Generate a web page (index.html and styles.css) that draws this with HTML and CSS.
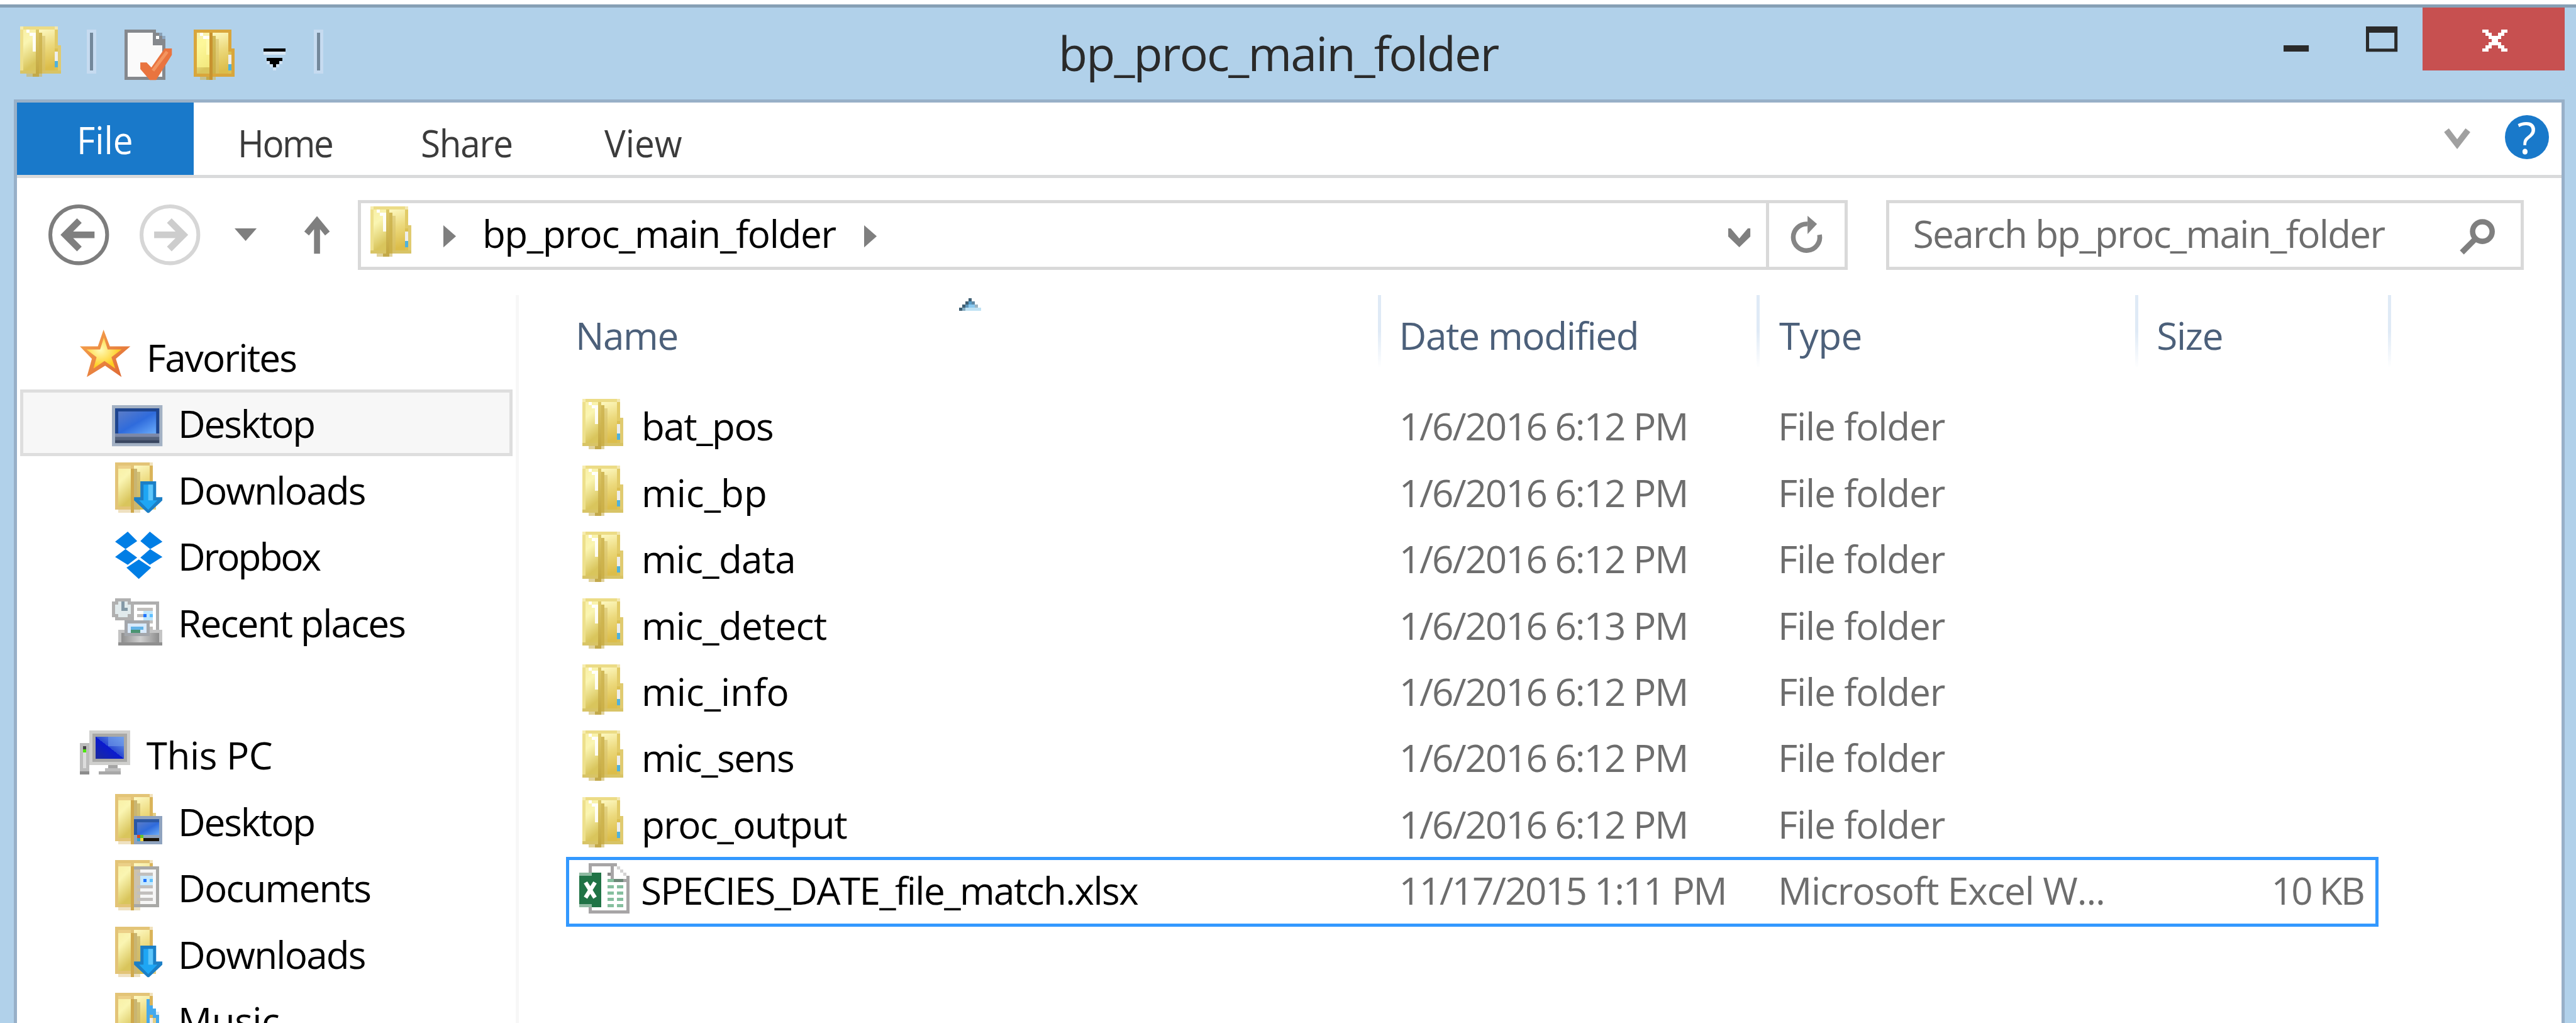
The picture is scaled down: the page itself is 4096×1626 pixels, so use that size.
FILE: index.html
```html
<!DOCTYPE html>
<html lang="en">
<head>
<meta charset="utf-8">
<title>bp_proc_main_folder</title>
<link rel="stylesheet" href="styles.css">
</head>
<body>
<svg class="defs" aria-hidden="true">
  <defs>
    <linearGradient id="gLeft" x1="0" y1="0" x2="0.3" y2="1"><stop offset="0" stop-color="#f8efa4"/><stop offset=".4" stop-color="#faf5b2"/><stop offset="1" stop-color="#d9c55c"/></linearGradient>
    <linearGradient id="gRight" x1="0" y1="0" x2="0.2" y2="1"><stop offset="0" stop-color="#fefac4"/><stop offset=".5" stop-color="#ecd97c"/><stop offset="1" stop-color="#dcbd4a"/></linearGradient>
    <linearGradient id="gSpine" x1="0" y1="0" x2="0" y2="1"><stop offset="0" stop-color="#dcc767"/><stop offset="1" stop-color="#c3a741"/></linearGradient>
    <linearGradient id="gScreen" x1="0" y1="0" x2="1" y2="1"><stop offset="0" stop-color="#5a7cc8"/><stop offset=".5" stop-color="#2f6bdc"/><stop offset="1" stop-color="#6aacfb"/></linearGradient>
    <linearGradient id="gStar" x1="0" y1="0" x2="1" y2="1"><stop offset="0" stop-color="#f7a03c"/><stop offset="1" stop-color="#d9531c"/></linearGradient>
    <radialGradient id="gStarIn" cx=".4" cy=".4" r=".55"><stop offset="0" stop-color="#fffbb8"/><stop offset="1" stop-color="#ffcd1f"/></radialGradient>
    <linearGradient id="gPc" x1="0" y1="1" x2="1" y2="0"><stop offset="0" stop-color="#1b2a9c"/><stop offset=".5" stop-color="#0a1ad0"/><stop offset=".5" stop-color="#2a48d0"/><stop offset="1" stop-color="#6fa6ee"/></linearGradient>
    <linearGradient id="gTray" x1="0" y1="0" x2="1" y2="0"><stop offset="0" stop-color="#8f8f8f"/><stop offset=".5" stop-color="#cfcfcf"/><stop offset="1" stop-color="#8c8c8c"/></linearGradient>
    <symbol id="folder" viewBox="0 0 16 16"><g shape-rendering="crispEdges">
      <rect x="1" y="0" width="12" height="1" fill="#ecdc86"/><rect x="1" y="0" width="1" height="1" fill="#f6ecae"/><rect x="12" y="0" width="1" height="1" fill="#f3e7b0"/>
      <rect x="1" y="1" width="5" height="13" fill="url(#gLeft)"/>
      <rect x="6" y="1" width="7" height="13" fill="url(#gRight)"/>
      <rect x="1" y="1" width="1" height="14" fill="#eee08c"/>
      <rect x="12" y="1" width="1" height="6" fill="#e2cb67"/><rect x="13" y="6" width="1" height="9" fill="#e0cb70"/>
      <rect x="12" y="7" width="1" height="7" fill="#dcc052"/>
      <rect x="1" y="14" width="13" height="1" fill="#d8c466"/>
      <rect x="3" y="1" width="1" height="1" fill="#fff"/><rect x="4" y="2" width="1" height="1" fill="#fff"/><rect x="5" y="2" width="1" height="6" fill="#fff" opacity=".9"/>
      <rect x="6" y="1" width="1" height="14" fill="url(#gSpine)"/><rect x="7" y="2" width="1" height="13" fill="#c9ae48" opacity=".85"/><rect x="8" y="3" width="1" height="12" fill="#d6c06a" opacity=".6"/>
      <rect x="12" y="8" width="1" height="3" fill="#eeeeec"/><rect x="12" y="11" width="1" height="2" fill="#4fb2dc"/>
      <rect x="3" y="15" width="5" height="1" fill="#cdb65c" opacity=".6"/><rect x="5" y="15" width="2" height="1" fill="#c3a94b"/>
    </g></symbol>
    <symbol id="folderLib" viewBox="0 0 16 16"><g shape-rendering="crispEdges">
      <rect x="1" y="0" width="12" height="15" fill="#e3c477"/><rect x="12" y="0" width="1" height="1" fill="#f1e2bc"/>
      <rect x="2" y="1" width="4" height="13" fill="url(#gLeft)"/><rect x="7" y="1" width="5" height="14" fill="url(#gRight)"/>
      <rect x="2" y="1" width="4" height="1" fill="#ecd088"/>
      <rect x="12" y="1" width="1" height="14" fill="#dab45a"/><rect x="13" y="6" width="1" height="9" fill="#e6cf84"/>
      <rect x="6" y="2" width="1" height="14" fill="#d0a94c"/><rect x="7" y="2" width="1" height="13" fill="#c9b572"/><rect x="8" y="3" width="1" height="12" fill="#cbb669" opacity=".8"/>
      <rect x="2" y="15" width="4" height="1" fill="#e4cd98" opacity=".6"/><rect x="7" y="15" width="2" height="1" fill="#ddcb99" opacity=".6"/>
    </g></symbol>
    <symbol id="downArrow" viewBox="0 0 16 16">
      <path d="M9 6h5v5h2v1l-4.500 4.200L7 12v-1h2z" fill="#1c7fc6"/><path d="M10 7h3v5h1.400l-2.900 3L8.600 12H10z" fill="#1ea6f4"/><path d="M11.500 7H13v5h-1.500z" fill="#5ec6fb"/>
    </symbol>
  </defs>
</svg>

<div class="window">
  <header class="titlebar">
    <div class="quick">
      <svg class="ico" viewBox="0 0 16 16"><use href="#folder"/></svg>
      <i class="sep"></i>
      <svg class="ico doc" viewBox="0 0 16 16"><g shape-rendering="crispEdges"><path d="M0 0h10v1h1v1h1v1h1v13H0z" fill="#85888d"/><path d="M1 1h8v4h3v10H1z" fill="#fafafa"/><rect x="10" y="2" width="1" height="1" fill="#fff"/><rect x="11" y="1" width="1" height="1" fill="#8aa0b5"/><rect x="12" y="2" width="1" height="1" fill="#8fa8c0"/></g><path d="M5 10.400h2l1.500 1.600 4.200-6H15v2L10 16H8L5 12.500z" fill="#e9743f"/><path d="M9 13l4.500-6" stroke="#f39560" stroke-width="1" fill="none"/></svg>
      <svg class="ico newf" viewBox="0 0 16 16"><use href="#folder"/><g shape-rendering="crispEdges"><path d="M1 0h12v6h1v9H1zM2 1v13h11V7h-1V1z" fill="#d9a63c" fill-rule="evenodd"/><rect x="2" y="3" width="4" height="9" fill="#fdf88e" opacity=".7"/><rect x="6" y="1" width="1" height="15" fill="#c8932f"/></g></svg>
      <svg class="custom" viewBox="0 0 7 8" shape-rendering="crispEdges"><path d="M0 1h7v1H0z" fill="#d9e7f4"/><path d="M0 0h7v1H0z"/><path d="M1 4h5v1H5v1H4v1H3V6H2V5H1z" fill="#cfe1f2"/><path d="M1 3h5v1H5v1H4v1H3V5H2V4H1z"/></svg>
      <i class="sep sep2"></i>
    </div>
    <h1 class="title"><span>bp_proc_main_folder</span></h1>
    <div class="controls">
      <svg class="min" viewBox="0 0 8 2"><path d="M0 0h8v2H0z" fill="#2a2a2a"/></svg>
      <svg class="max" viewBox="0 0 10 8"><path d="M0 0h10v8H0zM1 2v5h8V2z" fill="#2a2a2a" fill-rule="evenodd"/></svg>
      <div class="close"><svg viewBox="0 0 8 7" shape-rendering="crispEdges"><path d="M0 0h2v1h1v1h2V1h1V0h2v1H7v1H6v1H5v1h1v1h1v1h1v1H6V6H5V5H3v1H2v1H0V6h1V5h1V4h1V3H2V2H1V1H0z" fill="#fff"/></svg></div>
    </div>
  </header>

  <main class="client">
    <nav class="ribbon">
      <div class="tab file"><span>File</span></div>
      <div class="tab home"><span>Home</span></div>
      <div class="tab share"><span>Share</span></div>
      <div class="tab view"><span>View</span></div>
      <svg class="expand" viewBox="0 0 8 7"><path d="M.6.8L4 5.200 7.400.8" fill="none" stroke="#a0a0a0" stroke-width="1.900"/></svg>
      <div class="help"><span>?</span></div>
    </nav>

    <div class="navbar">
      <svg class="back" viewBox="0 0 20 20"><circle cx="10" cy="10" r="9" fill="none" stroke="#7d7d7d" stroke-width="1.200"/><path d="M15 10H6M10.200 5.500L5.700 10l4.500 4.500" fill="none" stroke="#7f7f7f" stroke-width="2.100"/></svg>
      <svg class="fwd" viewBox="0 0 20 20"><circle cx="10" cy="10" r="9" fill="none" stroke="#d6d6d6" stroke-width="1.200"/><path d="M5 10h9M9.800 5.500l4.500 4.500-4.500 4.500" fill="none" stroke="#cdcdcd" stroke-width="2.100"/></svg>
      <svg class="recent" viewBox="0 0 7 4"><path d="M0 0h7L3.500 4z" fill="#7f7f7f"/></svg>
      <svg class="up" viewBox="0 0 8 12"><path d="M4 12V2M.7 5.600L4 1.600l3.300 4" fill="none" stroke="#7f7f7f" stroke-width="1.900"/></svg>
      <div class="address">
        <svg class="ico" viewBox="0 0 16 16"><use href="#folder"/></svg>
        <svg class="crumb c1" viewBox="0 0 4 7"><path d="M0 0l4 3.500L0 7z" fill="#7f7f7f"/></svg>
        <span class="path">bp_proc_main_folder</span>
        <svg class="crumb c2" viewBox="0 0 4 7"><path d="M0 0l4 3.500L0 7z" fill="#7f7f7f"/></svg>
        <svg class="drop" viewBox="0 0 7 6"><path d="M0 0h.8L3.500 3.200 6.200 0H7v2.600L3.500 6 0 2.600z" fill="#7f7f7f"/></svg>
        <div class="refresh"><svg viewBox="0 0 10 12"><path d="M5.200 2.600A4.200 4.200 0 1 0 9 6" fill="none" stroke="#858585" stroke-width="1.500"/><path d="M5.200 0l3 2.600-3 3.200z" fill="#858585"/></svg></div>
      </div>
      <div class="search">
        <span>Search bp_proc_main_folder</span>
        <svg viewBox="0 0 11 11"><circle cx="7" cy="4" r="3.100" fill="none" stroke="#7f7f7f" stroke-width="1.700"/><path d="M4.900 6.200L.5 10.600" stroke="#7f7f7f" stroke-width="1.800"/></svg>
      </div>
    </div>

    <div class="body">
      <aside class="tree">
        <div class="node root"><svg class="ico" viewBox="0 0 16 16"><path d="M7.500 0l2 5.300H16l-4.600 3.900L13.200 15 8 11.400 2.200 15l1.600-5.800L0 5.300h5.700z" fill="url(#gStar)" opacity=".9"/><path d="M7.600 2.500l1.200 3.800h4.400L10 8.700l1.200 3.600-3.400-2.400-3.500 2.400 1-3.600-3.200-2.400h4.300z" fill="url(#gStarIn)"/></svg><span>Favorites</span></div>
        <div class="node selected"><svg class="ico" viewBox="0 0 16 16"><path d="M0 3h16v13H0z" fill="#a3b1c4"/><path d="M1 4h14v8H1z" fill="#1e458f"/><path d="M2 5h12v7H2z" fill="url(#gScreen)"/><path d="M1 12h14v1H1z" fill="#7c88a8"/><path d="M1 13h14v1H1z" fill="#53617b"/><path d="M1 14h14v1H1z" fill="#38455f"/></svg><span class="t-desktop">Desktop</span></div>
        <div class="node"><svg class="ico" viewBox="0 0 16 16"><use href="#folderLib"/><use href="#downArrow"/></svg><span>Downloads</span></div>
        <div class="node"><svg class="ico" viewBox="0 0 16 16"><g fill="#007ee5"><path d="M5 1l3 3-3.700 2.500L1 4.200zM12 1L9 4l3.100 2.500L16 4.200zM1 9l3.300-2.500L8 9.200 5 11.500zM16 9l-3.900-2.500L9 9.200l3 2.300z"/><path d="M8.500 9.800l3.900 2.600L8.500 16 4.600 12.400z"/></g></svg><span class="t-dropbox">Dropbox</span></div>
        <div class="node"><svg class="ico" viewBox="0 0 16 16" shape-rendering="crispEdges"><path d="M6 2h9v10H6z" fill="#aeaeae"/><path d="M7 3h7v9H7z" fill="#fff"/><path d="M8 4h5v1H8zM8 6h2v1H8zM12 8h1v1h-1zM12 10h1v1h-1z" fill="#c2c0bd"/><path d="M10 5h3v3h-3z" fill="#bfe6fd"/><path d="M10 6h1v1h-1z" fill="#1f74ff"/><path d="M12 6h1v1h-1z" fill="#5fc0ff"/><path d="M2 11h14v5H2z" fill="#c4c4c4"/><path d="M3 12h12v3H3z" fill="url(#gTray)"/><path d="M2 15h14v1H2z" fill="#8f8f8f"/><path d="M4 8h8v5H4z" fill="#a3a6ab"/><path d="M5 9h6v3H5z" fill="#d8eafb"/><path d="M6 10h4v1H6z" fill="#62b3e8"/><path d="M6 11h3v1H6z" fill="#4a9472"/><path d="M1 1h5v1h1v5H6v1H1V7H0V2h1z" fill="#b0b0b0"/><path d="M2 2h3v1h1v3H5v1H2V6H1V3h1z" fill="#e1eaec"/><path d="M3 2h1v2h1v1H3z" fill="#8499a6"/></svg><span>Recent places</span></div>
        <div class="node root pc"><svg class="ico" viewBox="0 0 16 16" shape-rendering="crispEdges"><path d="M3 1h13v11H3z" fill="#cfcfcd"/><path d="M4 2h11v9H4z" fill="#a9a9a7"/><path d="M5 3h9v7H5z" fill="url(#gPc)"/><path d="M9 3h5v3H9z" fill="#6f9ae8" opacity=".6"/><path d="M9 12h3v1H9z" fill="#a5a5a5"/><path d="M8 13h5v1H8z" fill="#bdbdbd"/><path d="M6 14h7v1H6z" fill="#a8a8a8"/><path d="M0 5h3v10H0z" fill="#bcbcbc"/><path d="M1 6h1v1H1z" fill="#444"/><path d="M1 7h1v1H1z" fill="#4be60a"/><path d="M1 8h1v5H1z" fill="#dcdcdc"/><path d="M0 14h3v1H0z" fill="#8c8c8c"/></svg><span class="t-wide">This PC</span></div>
        <div class="node"><svg class="ico" viewBox="0 0 16 16"><use href="#folderLib"/><g shape-rendering="crispEdges"><path d="M7 7h9v9H7z" fill="#8fa3bf"/><path d="M7 8h8v5H7z" fill="#2b58a5"/><path d="M8 9h7v4H8z" fill="url(#gScreen)"/><path d="M10 14h5v1h-5z" fill="#1b150c"/><path d="M8 13h1v1H8z" fill="#d9481c"/><path d="M9 13h1v1H9z" fill="#63c62e"/><path d="M8 14h1v1H8z" fill="#2c9fd0"/><path d="M9 14h1v1H9z" fill="#f5d63c"/></g></svg><span class="t-desktop">Desktop</span></div>
        <div class="node"><svg class="ico" viewBox="0 0 16 16"><use href="#folderLib"/><g shape-rendering="crispEdges"><path d="M7 2h8v13H7z" fill="#a8a8a6"/><path d="M7 3h7v11H7z" fill="#f6f6f6"/><path d="M7 3h2v11H7z" fill="#b9ad90" opacity=".7"/><path d="M8 4h5v1H8zM8 8h5v1H8zM8 10h5v1H8zM8 12h5v1H8z" fill="#c1bfbd"/><path d="M9 5h4v3H9z" fill="#c6e8fc"/><path d="M10 6h1v1h-1z" fill="#1f74ff"/><path d="M12 6h1v1h-1z" fill="#5fc0ff"/></g></svg><span>Documents</span></div>
        <div class="node"><svg class="ico" viewBox="0 0 16 16"><use href="#folderLib"/><use href="#downArrow"/></svg><span>Downloads</span></div>
        <div class="node"><svg class="ico" viewBox="0 0 16 16"><use href="#folderLib"/><g shape-rendering="crispEdges" fill="#45a9ec"><path d="M11 2h1v2h1v1h1v2h1v7h-1V8h-1V7h-1v9h-1z"/><path d="M12 8h1v7h-1z" fill="#ececec"/><path d="M14 6h1v1h-1z" fill="#d9e9f7"/></g></svg><span class="t-wide">Music</span></div>
      </aside>

      <section class="list">
        <div class="row head">
          <div class="c name"><span>Name</span><svg class="sort" viewBox="0 0 7 4" shape-rendering="crispEdges"><path d="M0 3h7v1H0z" fill="#bfe2f4"/><path d="M0 3h1v1H0zM1 2h1v1H1zM2 1h1v1H2zM3 0h1v1H3z" fill="#3f5f73"/><path d="M1 3h1v1H1z" fill="#83aabf"/><path d="M2 2h1v1H2z" fill="#5d95ba"/><path d="M3 1h1v1H3z" fill="#559bc5"/><path d="M4 1h1v1H4z" fill="#5f87a3"/><path d="M3 2h2v1H3z" fill="#8ac8ee"/><path d="M5 2h1v1H5z" fill="#9cb4c2"/></svg></div>
          <div class="c date"><span>Date modified</span></div>
          <div class="c type"><span>Type</span></div>
          <div class="c size"><span>Size</span></div>
        </div>
        <div class="row"><div class="c name"><svg class="ico" viewBox="0 0 16 16"><use href="#folder"/></svg><span>bat_pos</span></div><div class="c date"><span>1/6/2016 6:12 PM</span></div><div class="c type"><span>File folder</span></div><div class="c size"></div></div>
        <div class="row"><div class="c name"><svg class="ico" viewBox="0 0 16 16"><use href="#folder"/></svg><span class="n-loose">mic_bp</span></div><div class="c date"><span>1/6/2016 6:12 PM</span></div><div class="c type"><span>File folder</span></div><div class="c size"></div></div>
        <div class="row"><div class="c name"><svg class="ico" viewBox="0 0 16 16"><use href="#folder"/></svg><span class="n-mid">mic_data</span></div><div class="c date"><span>1/6/2016 6:12 PM</span></div><div class="c type"><span>File folder</span></div><div class="c size"></div></div>
        <div class="row"><div class="c name"><svg class="ico" viewBox="0 0 16 16"><use href="#folder"/></svg><span class="n-mid">mic_detect</span></div><div class="c date"><span>1/6/2016 6:13 PM</span></div><div class="c type"><span>File folder</span></div><div class="c size"></div></div>
        <div class="row"><div class="c name"><svg class="ico" viewBox="0 0 16 16"><use href="#folder"/></svg><span class="n-loose">mic_info</span></div><div class="c date"><span>1/6/2016 6:12 PM</span></div><div class="c type"><span>File folder</span></div><div class="c size"></div></div>
        <div class="row"><div class="c name"><svg class="ico" viewBox="0 0 16 16"><use href="#folder"/></svg><span>mic_sens</span></div><div class="c date"><span>1/6/2016 6:12 PM</span></div><div class="c type"><span>File folder</span></div><div class="c size"></div></div>
        <div class="row"><div class="c name"><svg class="ico" viewBox="0 0 16 16"><use href="#folder"/></svg><span>proc_output</span></div><div class="c date"><span>1/6/2016 6:12 PM</span></div><div class="c type"><span>File folder</span></div><div class="c size"></div></div>
        <div class="row focused"><div class="c name"><svg class="ico" viewBox="0 0 16 16"><g shape-rendering="crispEdges"><path d="M3 0h9v1h1v1h1v1h1v1h1v12H3z" fill="#a7a5a6"/><path d="M4 1h6v5h5v9H4z" fill="#fff"/><path d="M11 1h1v1h1v1h1v1h1v1h-4z" fill="#fff"/><path d="M12 1h1v1h-1zM13 2h1v1h-1zM14 3h1v1h-1z" fill="#d4d3d3"/><path d="M9 3h1v1H9z" fill="#888"/><path d="M9 5h2v1H9zM12 5h2v1h-2zM9 7h2v1H9zM12 7h2v1h-2zM9 9h2v1H9zM12 9h2v1h-2zM9 11h2v1H9zM12 11h2v1h-2zM9 13h2v1H9zM12 13h2v1h-2z" fill="#86bf9f"/><path d="M11 5h1v1h-1zM12 5h2v1h-2z" fill="#6c8878"/><path d="M0 3h7v11H0z" fill="#207346"/><path d="M0 3h4v1H0zM0 13h4v1H0z" fill="#8fbaa1"/></g><path d="M2 6.100l3 4.800M5 6.100l-3 4.800" stroke="#fff" stroke-width="1.300"/></svg><span>SPECIES_DATE_file_match.xlsx</span></div><div class="c date"><span>11/17/2015 1:11 PM</span></div><div class="c type"><span>Microsoft Excel W...</span></div><div class="c size"><span>10 KB</span></div></div>
      </section>
    </div>
  </main>
</div>
</body>
</html>
```
FILE: styles.css
```css
/* 1rem is one design pixel of the 816-wide layout */
html { font-size: 5.0196px; background: #fff; }
body { box-sizing: border-box; width: 816rem; height: 323.9rem; margin: 0; padding-top: 1.4rem; overflow: hidden; font-family: "Open Sans", "Noto Sans", sans-serif; color: #000; }
svg { display: block; flex: none; overflow: visible; }
.defs { position: absolute; width: 0; height: 0; }
span { font-size: 12rem; white-space: pre; }

.window { box-sizing: border-box; height: 322.5rem; border-top: 1rem solid #869fb4; background: #b1d1ea; overflow: hidden; }
.ico { width: 16rem; height: 16rem; }

/* Title bar */
.titlebar { display: grid; grid-template-columns: 335.3rem 1fr 92.600rem; height: 29rem; padding-right: 3.600rem; }
.quick { display: flex; padding: 6rem 0 0 5.4rem; align-items: flex-start; }
.sep { width: 1rem; height: 12rem; margin: 2rem 0 0 7rem; background: #73889b; box-shadow: 0 0 0 1rem #c6dbf0; }
.doc { margin: 1rem 0 0 10rem; }
.newf { margin: 1rem 0 0 5rem; }
.custom { width: 7rem; height: 8rem; margin: 7rem 0 0 7rem; }
.sep2 { margin-left: 10rem; }
.title { margin: 0; font-weight: 400; line-height: 28.8rem; }
.title span { display: block; font-size: 15rem; letter-spacing: -.37rem; color: #2a2a2a; }
.controls { display: flex; align-items: flex-start; }
.min { width: 8rem; height: 2rem; margin: 12rem 0 0 3.600rem; }
.max { width: 10rem; height: 8rem; margin: 6rem 0 0 18rem; }
.close { width: 45rem; height: 20rem; margin-left: 8rem; background: #c75050; }
.close svg { width: 8rem; height: 7rem; margin: 7rem 0 0 19rem; }

/* Ribbon tabs */
.client { box-sizing: border-box; width: 808rem; height: 300rem; margin-left: 4.4rem; border: 1rem solid #98b0c8; border-bottom: 0; background: #fff; }
.ribbon { display: flex; height: 23rem; border-bottom: 1rem solid #d9dadb; }
.tab { box-sizing: border-box; height: 23rem; line-height: 25.600rem; color: #3b3b3b; }
.tab span { display: block; transform: scaleX(.94); transform-origin: 0 50%; }
.file { width: 56rem; padding-left: 19rem; background: #1979ca; line-height: 23.600rem; color: #fff; }
.home { width: 57rem; padding-left: 13.900rem; letter-spacing: -.5rem; }
.share { width: 58rem; padding-left: 14.800rem; letter-spacing: -.27rem; }
.view { padding-left: 15.100rem; }
.expand { width: 8rem; height: 7rem; margin: 8rem 11rem 0 auto; }
.help { width: 14rem; height: 14rem; margin: 4rem 4rem 0 0; border-radius: 50%; background: #1979ca; color: #fff; text-align: center; line-height: 14rem; }
.help span { display: block; font-size: 14rem; }

/* Navigation bar */
.navbar { display: flex; align-items: flex-start; box-sizing: border-box; height: 30rem; padding-top: 7rem; }
.back, .fwd { width: 20rem; height: 20rem; margin: 1rem 0 0 9.500rem; }
.fwd { margin-left: 9rem; }
.recent { width: 7rem; height: 4rem; margin: 9rem 0 0 10.500rem; }
.up { width: 8rem; height: 12rem; margin: 5rem 0 0 15rem; }
.address { box-sizing: border-box; display: flex; width: 472rem; height: 22rem; margin-left: 9rem; border: 1rem solid #d9d9d9; line-height: 19.500rem; }
.address .ico { margin: 1rem 0 0 2rem; }
.crumb { width: 4rem; height: 7rem; margin: 7rem 0 0 8rem; }
.path { margin-left: 8.4rem; letter-spacing: -.27rem; }
.c2 { margin-left: 9rem; }
.drop { width: 7rem; height: 6rem; margin: 8rem 5rem 0 auto; }
.refresh { width: 24rem; border-left: 1rem solid #d9d9d9; }
.refresh svg { width: 10rem; height: 12rem; margin: 4rem 0 0 7rem; }
.search { box-sizing: border-box; display: flex; width: 202rem; height: 22rem; margin-left: 12rem; padding-left: 7.600rem; border: 1rem solid #d9d9d9; line-height: 19.500rem; letter-spacing: -.34rem; color: #6d6d6d; }
.search svg { width: 11rem; height: 11rem; margin: 5rem 8rem 0 auto; }

/* Folder tree */
.body { box-sizing: border-box; display: flex; height: 239rem; padding-top: 7rem; }
.tree { box-sizing: border-box; width: 159rem; padding-top: 9rem; border-right: 1rem solid #f7f7f7; letter-spacing: -.36rem; }
.node { box-sizing: border-box; display: flex; width: 156rem; height: 21rem; margin-left: 1rem; padding: 2rem 0 0 29rem; line-height: 17.600rem; }
.root { padding-left: 19rem; }
.pc { margin-top: 21rem; }
.selected { padding: 1rem 0 0 28rem; border: 1rem solid #dedede; background: #f7f7f7; }
.node span { margin-left: 5rem; }
.t-desktop { letter-spacing: -.44rem; }
.t-dropbox { letter-spacing: -.6rem; }
.t-wide { letter-spacing: -.1rem; }

/* File list */
.list { flex: none; width: 578rem; margin-left: 15rem; letter-spacing: -.3rem; }
.row { box-sizing: border-box; display: flex; height: 21rem; line-height: 21.500rem; color: #6d6d6d; }
.c { box-sizing: border-box; display: flex; flex: none; }
.name { width: 257rem; color: #000; }
.name span { margin-left: 3.800rem; }
.date, .type, .size { width: 120rem; padding-left: 6.800rem; }
.date { letter-spacing: -.41rem; }
.type { letter-spacing: -.23rem; }
.size { width: 80rem; }
.row .ico { margin: 2rem 0 0 4rem; }
.head { height: 31rem; line-height: 25.500rem; }
.head .c { height: 23rem; color: #4c607a; letter-spacing: -.27rem; }
.head .name span { margin-left: 2.900rem; }
.head .date, .head .type, .head .size { padding-left: 5.800rem; border-left: 1rem solid; border-image: linear-gradient(#dfeaf6 50%, #fff) 1; }
.head .type { padding-left: 6.200rem; letter-spacing: -.11rem; }
.head .size { width: 81rem; border-right: 1rem solid; }
.sort { width: 7rem; height: 4rem; margin: 1rem 0 0 89rem; }
.n-loose { letter-spacing: 0; }
.n-mid { letter-spacing: -.16rem; }
.focused { width: 574rem; height: 22rem; border: 1rem solid #3399ff; line-height: 19.500rem; }
.focused .name { width: 256rem; }
.focused .ico { margin: 1rem 0 0 3rem; }
.focused .name span { margin-left: 3.600rem; letter-spacing: -.32rem; }
.focused .date { letter-spacing: -.45rem; }
.focused .size { flex: 1; justify-content: flex-end; padding: 0 3.700rem 0 0; letter-spacing: -.54rem; }
```
